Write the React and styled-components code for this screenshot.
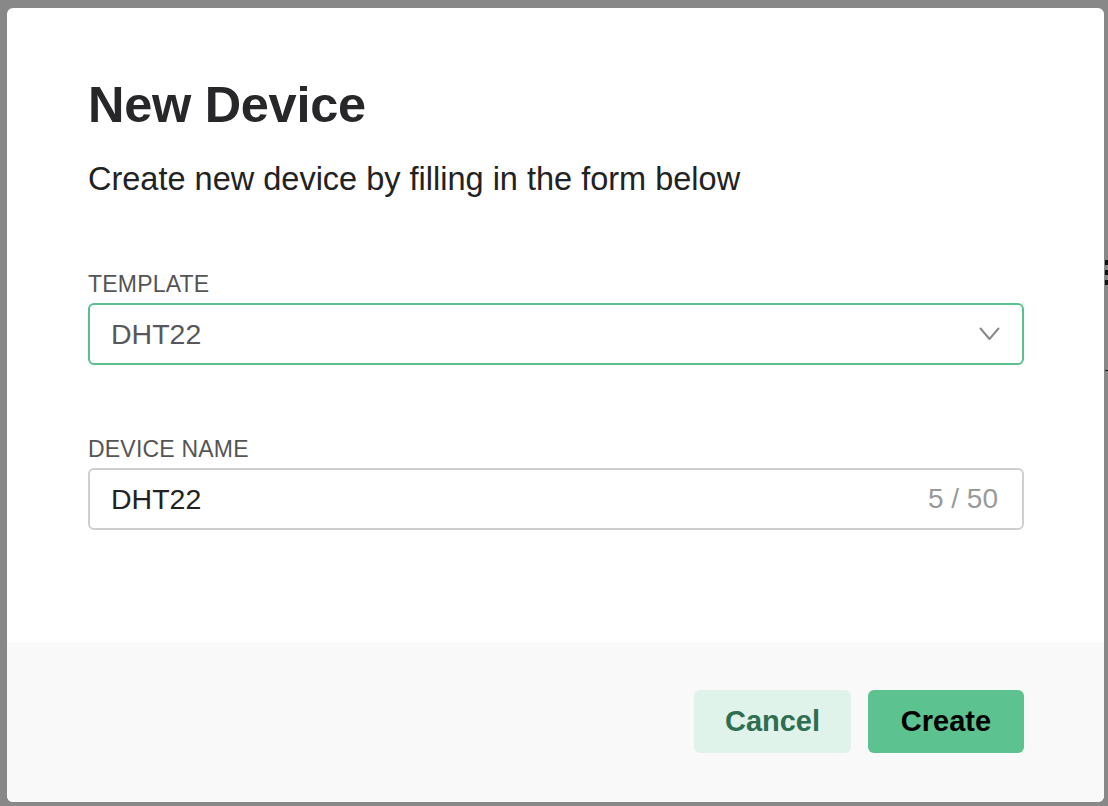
import React from 'react';
import styled, { createGlobalStyle } from 'styled-components';

const GlobalStyle = createGlobalStyle`
    html, body {
        margin: 0;
        padding: 0;
        height: 100%;
    }
    body {
        font-family: "Liberation Sans", Arial, sans-serif;
        background: #ffffff;
        overflow: hidden;
    }
`;

// the page sitting under the dialog, mostly hidden
const Page = styled.div`
    position: fixed;
    inset: 0;
    background: #ffffff;
`;

const PageMenu = styled.div`
    position: absolute;
    left: 1105px;
    top: 260px;
    display: flex;
    flex-direction: column;
    gap: 5px;
    span {
        display: block;
        width: 6px;
        height: 5px;
        background: #222;
    }
`;

const PageRule = styled.div`
    position: absolute;
    left: 1105px;
    top: 370px;
    width: 10px;
    height: 1px;
    background: #333;
`;

const Overlay = styled.div`
    position: fixed;
    inset: 0;
    background: rgba(0, 0, 0, 0.467);
    padding: 8px 4px 4px 7px;
    box-sizing: border-box;
    display: flex;
`;

const Modal = styled.div`
    flex: 1;
    background: #fff;
    border-radius: 6px;
    overflow: hidden;
    display: flex;
    flex-direction: column;
`;

const Body = styled.div`
    flex: 1;
    padding: 71px 80px 0 81px;
`;

const Title = styled.h1`
    margin: 0;
    font-size: 50.5px;
    line-height: 52px;
    font-weight: 700;
    color: #27272a;
    letter-spacing: -0.3px;
`;

const Subtitle = styled.p`
    margin: 28px 0 0;
    font-size: 32.5px;
    line-height: 40px;
    color: #222;
`;

const Field = styled.div`
    margin-top: ${(p) => p.$top}px;
`;

const Label = styled.div`
    font-size: 23px;
    line-height: 26px;
    color: #555;
    letter-spacing: 0.2px;
    text-transform: uppercase;
`;

const InputBox = styled.div`
    margin-top: 6px;
    height: 62px;
    box-sizing: border-box;
    border: 2px solid ${(p) => (p.$active ? '#5bc08f' : '#cfcfcf')};
    border-radius: 6px;
    display: flex;
    align-items: center;
    justify-content: space-between;
    padding: 0 22px 0 21px;
`;

const Value = styled.span`
    font-size: 28.5px;
    color: ${(p) => (p.$muted ? '#58585c' : '#222')};
`;

const Counter = styled.span`
    font-size: 28px;
    color: #9a9a9a;
    padding-right: 2px;
`;

const Footer = styled.div`
    height: 160px;
    box-sizing: border-box;
    background: #f9f9f9;
    display: flex;
    justify-content: flex-end;
    align-items: flex-start;
    gap: 17px;
    padding: 48px 80px 0 0;
`;

const Button = styled.button`
    height: 63px;
    width: ${(p) => p.$width}px;
    border: none;
    border-radius: 6px;
    font-family: inherit;
    font-size: 29px;
    font-weight: 700;
    background: ${(p) => (p.$primary ? '#5bc290' : '#e0f3ea')};
    color: ${(p) => (p.$primary ? '#000' : '#2f6e50')};
    cursor: pointer;
`;

const Chevron = () => (
    <svg width="21" height="14" viewBox="0 0 21 14" fill="none">
        <polyline
            points="1.5,1.5 10.5,12 19.5,1.5"
            stroke="#8a8a8a"
            strokeWidth="2"
            strokeLinecap="round"
            strokeLinejoin="round"
        />
    </svg>
);

export default function App() {
    return (
        <>
            <GlobalStyle />
            <Page>
                <PageMenu>
                    <span />
                    <span />
                    <span />
                </PageMenu>
                <PageRule />
            </Page>
            <Overlay>
                <Modal>
                    <Body>
                        <Title>New Device</Title>
                        <Subtitle>Create new device by filling in the form below</Subtitle>
                        <Field $top={72}>
                            <Label>Template</Label>
                            <InputBox $active>
                                <Value $muted>DHT22</Value>
                                <Chevron />
                            </InputBox>
                        </Field>
                        <Field $top={71}>
                            <Label>Device Name</Label>
                            <InputBox>
                                <Value>DHT22</Value>
                                <Counter>5 / 50</Counter>
                            </InputBox>
                        </Field>
                    </Body>
                    <Footer>
                        <Button $width={157}>Cancel</Button>
                        <Button $primary $width={156}>Create</Button>
                    </Footer>
                </Modal>
            </Overlay>
        </>
    );
}
